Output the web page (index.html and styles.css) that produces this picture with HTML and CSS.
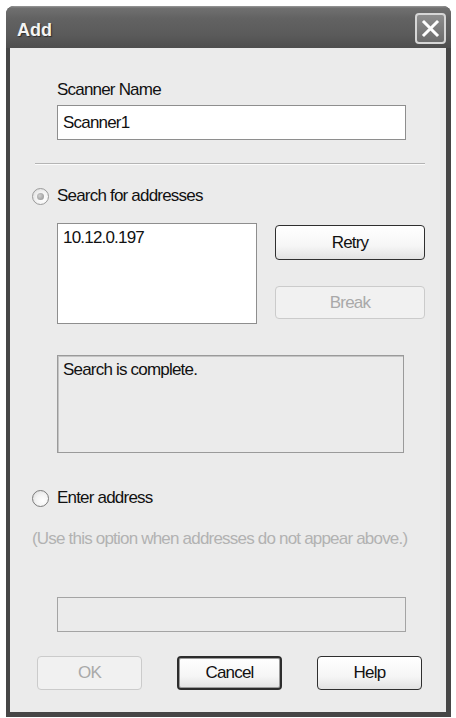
FILE: index.html
```html
<!DOCTYPE html>
<html>
<head>
<meta charset="utf-8">
<link rel="stylesheet" href="styles.css">
</head>
<body>
<div class="window">
  <div class="titlebar">
    <span class="title">Add</span>
    <span class="close">
      <svg width="27" height="27" viewBox="0 0 27 27"><path d="M7 7 L20 20 M20 7 L7 20" stroke="#fff" stroke-width="3" stroke-linecap="square" fill="none"/></svg>
    </span>
  </div>
  <div class="content">
    <div class="label">Scanner Name</div>
    <div class="field name-field">Scanner1</div>
    <div class="separator"></div>
    <div class="radio-row search-row"><span class="radio checked"></span><span>Search for addresses</span></div>
    <div class="search-area">
      <div class="listbox"><div class="list-item">10.12.0.197</div></div>
      <div class="side-buttons">
        <div class="btn retry">Retry</div>
        <div class="btn disabled break">Break</div>
      </div>
    </div>
    <div class="status">Search is complete.</div>
    <div class="radio-row enter-row"><span class="radio"></span><span>Enter address</span></div>
    <div class="hint">(Use this option when addresses do not appear above.)</div>
    <div class="field address-field"></div>
    <div class="buttons">
      <div class="btn disabled">OK</div>
      <div class="btn default">Cancel</div>
      <div class="btn">Help</div>
    </div>
  </div>
</div>
</body>
</html>
```

FILE: styles.css
```css
html, body {
  margin: 0;
  padding: 0;
  background: #ffffff;
}

body {
  font-family: "Liberation Sans", Arial, sans-serif;
  font-size: 17px;
  letter-spacing: -0.8px;
  line-height: 22px;
  color: #111;
}

.window {
  margin: 6px 0 0 6px;
  width: 445px;
  height: 711px;
  box-sizing: border-box;
  padding: 0 5px 5px 4px;
  background: #464646;
  border-radius: 8px 8px 0 0;
  display: flex;
  flex-direction: column;
}

.titlebar {
  height: 42px;
  flex: none;
  margin: 0 -5px 0 -4px;
  padding: 0 5px 0 11px;
  border-radius: 8px 8px 0 0;
  background: linear-gradient(#9a9a9a 0, #707070 2px, #626262 30%, #5a5a5a 70%, #4e4e4e 100%);
  display: flex;
  justify-content: space-between;
  align-items: flex-start;
}

.title {
  margin-top: 13px;
  font-family: "Liberation Sans", Arial, sans-serif;
  font-weight: bold;
  font-size: 18px;
  letter-spacing: 0;
  line-height: 22px;
  color: #f4f4f4;
  text-shadow: 1px 1px 1px #2c2c2c;
}

.close {
  margin-top: 7px;
  width: 31px;
  height: 31px;
  box-sizing: border-box;
  border: 2px solid #d6d6d6;
  border-radius: 4px;
  background: linear-gradient(#8e8e8e, #6c6c6c);
  display: flex;
  align-items: center;
  justify-content: center;
}

.close svg {
  display: block;
}

.content {
  flex: 1;
  background: #ebebeb;
  overflow: hidden;
}

.label {
  margin: 31px 0 0 47px;
  height: 22px;
}

.field {
  box-sizing: border-box;
  width: 349px;
  height: 35px;
  margin-left: 47px;
  border: 1px solid #8e8e8e;
  background: #fff;
  padding: 0 5px;
  line-height: 33px;
}

.name-field {
  margin-top: 4px;
}

.separator {
  margin: 23px 0 0 25px;
  width: 390px;
  height: 1px;
  background: #b4b4b4;
  border-bottom: 1px solid #fbfbfb;
}

.radio-row {
  height: 22px;
  margin-left: 22px;
  display: flex;
  align-items: center;
  gap: 8px;
}

.search-row {
  margin-top: 20px;
}

.enter-row {
  margin-top: 34px;
}

.radio {
  width: 17px;
  height: 17px;
  box-sizing: border-box;
  border: 1px solid #7c7c7c;
  border-radius: 50%;
  background: radial-gradient(circle at 65% 65%, #ffffff 0, #f2f2f2 50%, #d6d6d6 100%);
  display: flex;
  align-items: center;
  justify-content: center;
}

.radio.checked {
  border-color: #9a9a9a;
}

.radio.checked::after {
  content: "";
  width: 7px;
  height: 7px;
  border-radius: 50%;
  background: radial-gradient(circle at 40% 40%, #d0d0d0, #8c8c8c);
}

.search-area {
  margin-top: 16px;
  height: 101px;
  display: flex;
  align-items: flex-start;
}

.listbox {
  margin-left: 47px;
  width: 200px;
  height: 101px;
  box-sizing: border-box;
  border: 1px solid #8e8e8e;
  background: #fff;
  padding: 3px 5px;
}

.side-buttons {
  margin-left: 18px;
  width: 150px;
  padding-top: 2px;
  display: flex;
  flex-direction: column;
}

.btn {
  box-sizing: border-box;
  height: 34px;
  border: 1px solid #2f2f2f;
  border-radius: 4px;
  background: linear-gradient(#ffffff 0, #f6f6f6 60%, #e2e2e2 100%);
  display: flex;
  align-items: center;
  justify-content: center;
  color: #111;
}

.btn.default {
  border: 2px solid #2c2c2c;
  box-shadow: inset 0 0 0 1px #9a9a9a;
}

.btn.disabled {
  border-color: #cbcbcb;
  background: #f1f1f1;
  color: #a9a9a9;
}

.retry {
  height: 35px;
}

.break {
  margin-top: 26px;
  height: 33px;
}

.status {
  margin: 31px 0 0 47px;
  width: 347px;
  height: 98px;
  box-sizing: border-box;
  border: 1px solid #9a9a9a;
  box-shadow: inset 1px 1px 0 #c4c4c4;
  background: #ebebeb;
  padding: 3px 5px;
}

.hint {
  margin: 19px 0 0 22px;
  height: 22px;
  color: #b2b2b2;
  white-space: nowrap;
}

.address-field {
  margin-top: 47px;
  background: #ebebeb;
  border-color: #a4a4a4;
}

.buttons {
  margin: 24px 0 0 27px;
  display: flex;
  gap: 35px;
}

.buttons .btn {
  width: 105px;
  height: 34px;
}
```
